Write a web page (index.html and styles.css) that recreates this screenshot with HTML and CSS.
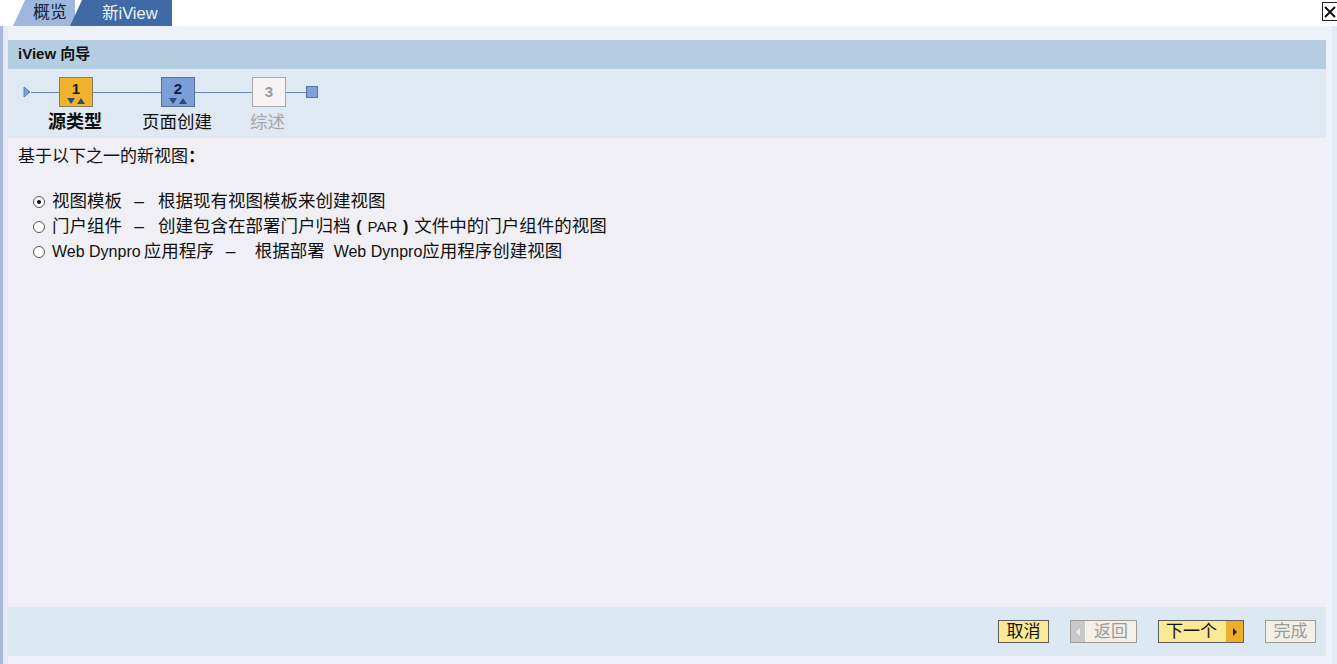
FILE: index.html
```html
<!DOCTYPE html>
<html lang="zh-CN">
<head>
    <meta charset="UTF-8">
    <title>iView 向导</title>
    <link rel="stylesheet" href="styles.css">
</head>
<body>
    <div class="tabbar">
        <div class="tab tab-light">概览</div>
        <div class="tab tab-dark">新iView</div>
        <div class="spacer"></div>
        <div class="close-btn">
            <svg width="14" height="14" viewBox="0 0 14 14"><path d="M2 2 L12 12 M12 2 L2 12" stroke="#111" stroke-width="2"/></svg>
        </div>
    </div>
    <div class="frame">
        <div class="panel">
            <div class="title-bar">iView 向导</div>
            <div class="steps">
                <div class="track">
                    <svg class="start" width="8" height="12" viewBox="0 0 8 12"><path d="M1 1 L7 6 L1 11 Z" fill="#7d9fcf" stroke="#5b7fb3"/></svg>
                    <div class="line l1"></div>
                    <div class="step step-current">
                        <span class="num">1</span>
                        <svg width="20" height="6" viewBox="0 0 20 6"><path d="M1 0 L9 0 L5 6 Z M11 6 L19 6 L15 0 Z" fill="#2d4a7a"/></svg>
                    </div>
                    <div class="line l2"></div>
                    <div class="step step-next">
                        <span class="num">2</span>
                        <svg width="20" height="6" viewBox="0 0 20 6"><path d="M1 0 L9 0 L5 6 Z M11 6 L19 6 L15 0 Z" fill="#2d4a7a"/></svg>
                    </div>
                    <div class="line l3"></div>
                    <div class="step step-off"><span class="num">3</span></div>
                    <div class="line l4"></div>
                    <div class="end"></div>
                </div>
                <div class="labels">
                    <span class="lbl lbl-1">源类型</span>
                    <span class="lbl lbl-2">页面创建</span>
                    <span class="lbl lbl-3">综述</span>
                </div>
            </div>
            <div class="content">
                <p class="intro">基于以下之一的新视图<span class="colon">：</span></p>
                <div class="options">
                    <label class="opt"><span class="radio checked"></span>视图模板<span class="sep">–</span>根据现有视图模板来创建视图</label>
                    <label class="opt"><span class="radio"></span>门户组件<span class="sep">–</span>创建包含在部署门户归档<span class="paren">(</span><span class="lat lat-sm">PAR</span><span class="paren">)</span>文件中的门户组件的视图</label>
                    <label class="opt"><span class="radio"></span><span class="lat">Web Dynpro</span><span class="gap"></span>应用程序<span class="sep sep-wide">–</span>根据部署<span class="gap gap-wide"></span><span class="lat">Web Dynpro</span>应用程序创建视图</label>
                </div>
            </div>
            <div class="footer">
                <div class="btn btn-yellow btn-short">取消</div>
                <div class="btn btn-off btn-back"><span class="arrow-l">
                    <svg width="6" height="10" viewBox="0 0 6 10"><path d="M5 1 L1 5 L5 9 Z" fill="#eee"/></svg>
                </span><span class="btn-text">返回</span></div>
                <div class="btn btn-yellow btn-next"><span class="btn-text">下一个</span><span class="arrow-r">
                    <svg width="6" height="10" viewBox="0 0 6 10"><path d="M1 1 L5 5 L1 9 Z" fill="#222"/></svg>
                </span></div>
                <div class="btn btn-off btn-short">完成</div>
            </div>
            <div class="bottom"></div>
        </div>
    </div>
</body>
</html>
```

FILE: styles.css
```css
body {
    margin: 0;
    padding: 0;
    background: #ffffff;
    font-family: "Liberation Sans", "Noto Sans CJK SC", sans-serif;
    color: #111;
    width: 1337px;
    height: 664px;
    overflow: hidden;
}

.tabbar {
    display: flex;
    height: 26px;
    align-items: stretch;
    padding-left: 13px;
}

.tab {
    font-size: 17px;
    line-height: 26px;
    clip-path: polygon(12px 0, 100% 0, 100% 100%, 0 100%);
}

.tab-light {
    background: #9db7dd;
    color: #16233a;
    width: 62px;
    padding-left: 20px;
    box-sizing: border-box;
}

.tab-dark {
    background: #3f6aa6;
    color: #f0f4fa;
    width: 102px;
    padding-left: 32px;
    box-sizing: border-box;
    margin-left: -5px;
    font-size: 16.5px;
}

.spacer {
    flex: 1;
}

.close-btn {
    width: 14px;
    height: 17px;
    margin-top: 2px;
    border: 1px solid #222;
    border-right: none;
    display: flex;
    align-items: center;
    justify-content: center;
    background: #fff;
}

.frame {
    height: 638px;
    background: #e4eaf6;
    border-left: 3px solid #a9b8dc;
    padding: 0 5px 0 5px;
    display: flex;
}

.panel {
    flex: 1;
    display: flex;
    flex-direction: column;
    background: #eef1f7;
    padding-top: 14px;
    padding-right: 6px;
}

.title-bar {
    height: 29px;
    background: #b4cde0;
    font-weight: bold;
    font-size: 15px;
    line-height: 28px;
    padding-left: 10px;
    color: #111;
}

.steps {
    height: 69px;
    background: #dfe9f3;
    position: relative;
}

.track {
    display: flex;
    align-items: center;
    padding-left: 15px;
    padding-top: 8px;
    height: 30px;
}

.start {
    display: block;
}

.line {
    height: 1px;
    background: #6a8cb6;
}

.l1 { width: 28px; }
.l2 { width: 68px; }
.l3 { width: 57px; }
.l4 { width: 20px; }

.step {
    width: 34px;
    height: 30px;
    box-sizing: border-box;
    display: flex;
    flex-direction: column;
    align-items: center;
    justify-content: space-between;
    padding: 3px 0 2px;
}

.step .num {
    font-size: 15px;
    font-weight: bold;
    line-height: 16px;
}

.step svg {
    display: block;
}

.step-current {
    background: #f1b32e;
    border: 1px solid #8c7d5a;
    color: #1a1a1a;
}

.step-next {
    background: #7d9fd7;
    border: 1px solid #55719f;
    color: #10203c;
}

.step-off {
    background: #f7f3f5;
    border: 1px solid #a8a8b0;
    color: #9a9a9a;
    justify-content: center;
    padding: 0;
}

.end {
    width: 12px;
    height: 12px;
    box-sizing: border-box;
    background: #7fa2dc;
    border: 1px solid #5574a8;
}

.labels {
    position: relative;
    height: 26px;
    font-size: 17.5px;
    margin-top: 4px;
}

.lbl {
    position: absolute;
    top: 0;
    line-height: 22px;
}

.lbl-1 { left: 40px; font-weight: bold; font-size: 18px; }
.lbl-2 { left: 134px; }
.lbl-3 { left: 242px; color: #a6a6a6; }

.content {
    flex: 1;
    background: #efeff5;
    padding-left: 10px;
}

.intro {
    margin: 9px 0 0;
    font-size: 17px;
    line-height: 20px;
}

.colon {
    display: inline-block;
    width: 17px;
    text-align: center;
    font-weight: bold;
}

.options {
    margin-top: 22px;
    padding-left: 15px;
    display: flex;
    flex-direction: column;
}

.opt {
    font-size: 17.5px;
    line-height: 25px;
    display: flex;
    align-items: center;
    white-space: pre;
}

.sep {
    display: inline-block;
    width: 10px;
    text-align: center;
    margin: 0 14px 0 12px;
}

.sep-wide {
    margin-right: 19px;
}

.gap {
    display: inline-block;
    width: 3px;
}

.gap-wide {
    width: 9px;
}

.paren {
    display: inline-block;
    width: 17px;
    text-align: center;
    font-weight: bold;
    font-size: 16px;
}

.lat {
    font-size: 16px;
}

.lat-sm {
    font-size: 15px;
}

.radio {
    width: 12px;
    height: 12px;
    border: 1px solid #555;
    border-radius: 50%;
    background: #fff;
    margin-right: 7px;
    box-sizing: border-box;
    position: relative;
    flex: none;
}

.radio.checked::after {
    content: "";
    position: absolute;
    left: 3px;
    top: 3px;
    width: 4px;
    height: 4px;
    border-radius: 50%;
    background: #111;
}

.footer {
    height: 49px;
    background: #dde9f2;
    display: flex;
    align-items: center;
    justify-content: flex-end;
    gap: 21px;
    padding-right: 10px;
}

.btn {
    height: 23px;
    box-sizing: border-box;
    font-size: 17px;
    line-height: 20px;
    display: flex;
    align-items: center;
}

.btn-short {
    width: 51px;
    justify-content: center;
}

.btn-yellow {
    background: #f9e894;
    border: 1px solid #5e5e5e;
    color: #111;
}

.btn-off {
    background: #f3f1e7;
    border: 1px solid #9c9c9c;
    color: #9a9a9a;
}

.btn-back {
    padding: 0;
    width: 67px;
}

.btn-back .arrow-l {
    width: 14px;
    height: 100%;
    background: #c8c8c8;
    display: flex;
    align-items: center;
    justify-content: center;
}

.btn-back .btn-text {
    padding-left: 9px;
}

.btn-next {
    padding: 0 0 0 7px;
    width: 86px;
}

.btn-next .btn-text {
    flex: 1;
}

.btn-next .arrow-r {
    width: 17px;
    height: 100%;
    background: #efad2c;
    display: flex;
    align-items: center;
    justify-content: center;
}

.bottom {
    height: 8px;
    background: #eef1f7;
}
```
